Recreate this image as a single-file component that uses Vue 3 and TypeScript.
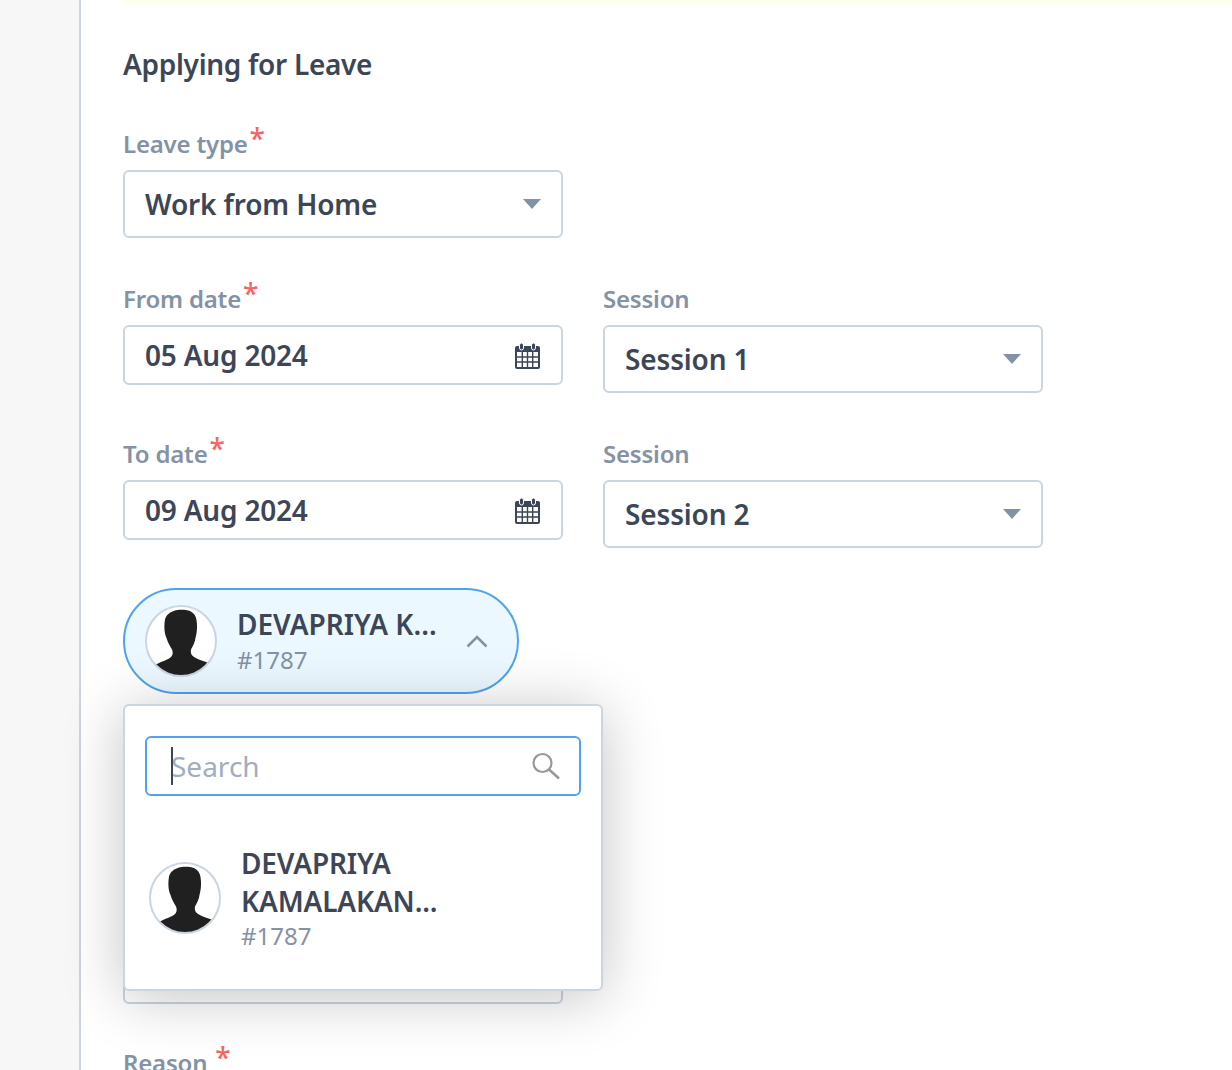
<script setup lang="ts">
type DateRow = {
  label: string;
  date: string;
  session: string;
};

const dateRows: DateRow[] = [
  { label: "From date", date: "05 Aug 2024", session: "Session 1" },
  { label: "To date", date: "09 Aug 2024", session: "Session 2" },
];

const silhouette =
  "M30 5.5C33 4.5 41 4.5 45 6C49 8 51 11 51.5 15C52.5 21 52 28 50.5 33C50 37 48 41 46 44.5C45.5 48 46 50 49 52C54 55 59 56 64 58C57 67 47 71 36 71C25 71 16 67 10 60C17 56 23 55 26 52C28 50 28 47 27 44.5C25 41 23 38 21.5 33C19 28 19 20 20 14.5C21 10 25 7 30 5.5Z";
</script>

<template>
  <div class="page">
    <aside class="rail"></aside>
    <main class="content">
      <div class="notice"></div>
      <h2 class="title">Applying for Leave</h2>

      <div class="field leave-type">
        <label class="label">Leave type<sup class="req">*</sup></label>
        <div class="select">
          <span>Work from Home</span>
          <i class="caret"></i>
        </div>
      </div>

      <div v-for="row in dateRows" :key="row.label" class="date-row">
        <div class="field">
          <label class="label">{{ row.label }}<sup class="req">*</sup></label>
          <div class="date-input">
            <span class="date-value">{{ row.date }}</span>
            <svg class="calendar" width="27" height="28" viewBox="0 0 27 28" fill="none">
              <rect x="1" y="4" width="25" height="23" rx="2" fill="#3d4656" />
              <rect x="3" y="10" width="21" height="15" fill="#fff" />
              <path d="M8.3 10v15M13.5 10v15M18.7 10v15M3 15h21M3 20h21" stroke="#3d4656" stroke-width="1.4" />
              <rect x="5.5" y="1" width="4" height="7" rx="2" fill="#3d4656" stroke="#fff" stroke-width="1" />
              <rect x="17.5" y="1" width="4" height="7" rx="2" fill="#3d4656" stroke="#fff" stroke-width="1" />
            </svg>
          </div>
        </div>
        <div class="field">
          <label class="label">Session</label>
          <div class="select">
            <span>{{ row.session }}</span>
            <i class="caret"></i>
          </div>
        </div>
      </div>

      <div class="picker">
        <div class="pill">
          <span class="avatar">
            <svg width="72" height="72" viewBox="0 0 72 72"><path :d="silhouette" fill="#202020" /></svg>
          </span>
          <div class="pill-text">
            <div class="pill-name">DEVAPRIYA K...</div>
            <div class="emp-id">#1787</div>
          </div>
          <svg class="chevron" width="22" height="13" viewBox="0 0 22 13" fill="none">
            <path d="M1.5 11.5L11 2l9.5 9.5" stroke="#8492a6" stroke-width="2.6" />
          </svg>
        </div>

        <div class="popup">
          <div class="search">
            <i class="cursor"></i>
            <span class="placeholder">Search</span>
            <svg width="30" height="30" viewBox="0 0 30 30" fill="none">
              <circle cx="11.5" cy="12" r="9" stroke="#999" stroke-width="2.2" />
              <path d="M18 18.5L28 27.5" stroke="#999" stroke-width="2.6" />
            </svg>
          </div>
          <div class="option">
            <span class="avatar">
              <svg width="72" height="72" viewBox="0 0 72 72"><path :d="silhouette" fill="#202020" /></svg>
            </span>
            <div class="option-text">
              <div class="option-name">DEVAPRIYA<br />KAMALAKAN...</div>
              <div class="emp-id">#1787</div>
            </div>
          </div>
        </div>
      </div>

      <div class="hidden-input"></div>

      <label class="label reason">Reason <sup class="req">*</sup></label>
    </main>
  </div>
</template>

<style>
html,
body {
  margin: 0;
  height: 100%;
  overflow: hidden;
  background: #fff;
}
</style>

<style scoped>
.page {
  display: flex;
  height: 1070px;
  overflow: hidden;
  font-family: "Noto Sans", "Open Sans", sans-serif;
  color: #3d4656;
}

.rail {
  flex: 0 0 79px;
  background: #f7f7f7;
  border-right: 2px solid #cbd5e0;
}

.content {
  flex: 1;
  min-width: 0;
  padding-left: 42px;
}

.notice {
  height: 5px;
  background: #fffff0;
  border-bottom-left-radius: 6px;
}

.title {
  margin: 37px 0 0;
  font-size: 28px;
  line-height: 44px;
  font-weight: 600;
  letter-spacing: -0.3px;
}

.leave-type {
  margin-top: 38px;
}

.field {
  width: 440px;
}

.label {
  display: block;
  height: 46px;
  font-size: 24px;
  line-height: 40px;
  font-weight: 600;
  letter-spacing: -0.2px;
  color: #8492a6;
  white-space: nowrap;
}

.req {
  margin-left: 2px;
  color: #f56565;
  font-size: 28px;
  font-weight: 500;
  line-height: 0;
  vertical-align: 4px;
}

.select,
.date-input {
  display: flex;
  align-items: center;
  justify-content: space-between;
  box-sizing: border-box;
  padding: 0 20px;
  background: #fff;
  border: 2px solid #cbd5e0;
  border-radius: 6px;
  font-size: 28px;
  font-weight: 600;
  letter-spacing: -0.15px;
}

.select {
  height: 68px;
}

.date-input {
  height: 60px;
}

.date-value {
  letter-spacing: -0.2px;
}

.calendar {
  margin-top: 2px;
}

.caret {
  width: 0;
  height: 0;
  border-left: 9px solid transparent;
  border-right: 9px solid transparent;
  border-top: 10px solid #8492a6;
}

.date-row {
  display: flex;
  gap: 40px;
  margin-top: 41px;
}

.picker {
  position: relative;
  margin-top: 40px;
}

.pill {
  display: flex;
  align-items: center;
  box-sizing: border-box;
  width: 396px;
  height: 106px;
  padding: 0 29px 0 20px;
  background: #ebf8ff;
  border: 2px solid #4fa3ee;
  border-radius: 53px;
}

.avatar {
  flex: 0 0 auto;
  box-sizing: border-box;
  width: 72px;
  height: 72px;
  overflow: hidden;
  background: #fff;
  border: 2px solid #cbd5e0;
  border-radius: 50%;
}

.avatar svg {
  display: block;
  margin: -2px;
}

.pill-text {
  flex: 1;
  margin-left: 20px;
}

.pill-name {
  font-size: 28px;
  line-height: 38px;
  font-weight: 600;
}

.emp-id {
  font-size: 24px;
  line-height: 34px;
  color: #8492a6;
}

.popup {
  position: absolute;
  top: 116px;
  left: 0;
  z-index: 2;
  box-sizing: border-box;
  width: 480px;
  height: 287px;
  padding: 30px 20px 0;
  background: #fff;
  border: 2px solid #cbd5e0;
  border-radius: 6px;
  box-shadow: 0 6px 60px rgba(0, 0, 0, 0.24);
}

.search {
  position: relative;
  display: flex;
  align-items: center;
  justify-content: space-between;
  box-sizing: border-box;
  height: 60px;
  padding: 0 18px 0 24px;
  border: 2px solid #4fa3ee;
  border-radius: 6px;
}

.cursor {
  position: absolute;
  left: 24px;
  top: 9px;
  width: 2px;
  height: 38px;
  background: #3d4656;
}

.placeholder {
  font-size: 28px;
  color: #a0aec0;
}

.option {
  display: flex;
  gap: 20px;
  margin-top: 48px;
  padding-left: 2px;
}

.option .avatar {
  margin: 18px 0 0 2px;
}

.option-name {
  font-size: 28px;
  line-height: 38px;
  font-weight: 600;
  letter-spacing: -0.15px;
}

.option-text .emp-id {
  margin-top: -1px;
}

.hidden-input {
  box-sizing: border-box;
  width: 440px;
  height: 60px;
  margin-top: 250px;
  border: 2px solid #cbd5e0;
  border-radius: 6px;
}

.reason {
  margin-top: 39px;
}
</style>
